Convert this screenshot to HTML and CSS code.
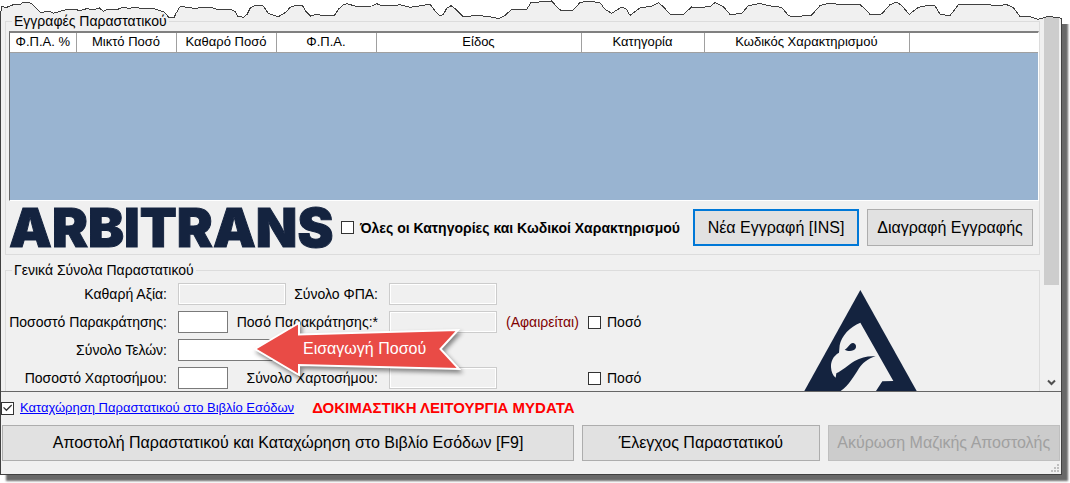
FILE: index.html
```html
<!DOCTYPE html>
<html lang="el">
<head>
<meta charset="utf-8">
<title>Παραστατικό</title>
<link rel="stylesheet" href="styles.css">
</head>
<body>
<main class="window">
  <div class="viewport">
    <div class="pane">
      <fieldset class="group records">
        <legend>Εγγραφές Παραστατικού</legend>
        <div class="datagrid">
          <table class="grid-head">
            <colgroup><col class="c-rate"><col class="c-num"><col class="c-num"><col class="c-num"><col class="c-wide"><col class="c-cat"><col class="c-wide"><col></colgroup>
            <thead><tr><th>Φ.Π.Α. %</th><th>Μικτό Ποσό</th><th>Καθαρό Ποσό</th><th>Φ.Π.Α.</th><th>Είδος</th><th>Κατηγορία</th><th>Κωδικός Χαρακτηρισμού</th><td></td></tr></thead>
          </table>
        </div>
        <div class="actions">
          <span class="wordmark">ARBITRANS</span>
          <label class="check strong"><input type="checkbox">Όλες οι Κατηγορίες και Κωδικοί Χαρακτηρισμού</label>
          <div class="buttons">
            <button class="btn focus" type="button">Νέα Εγγραφή [INS]</button>
            <button class="btn" type="button">Διαγραφή Εγγραφής</button>
          </div>
        </div>
      </fieldset>
      <fieldset class="group totals">
        <legend>Γενικά Σύνολα Παραστατικού</legend>
        <div class="totals-body">
          <div class="form">
            <label for="net">Καθαρή Αξία:</label><input class="field" id="net" disabled>
            <label for="vat">Σύνολο ΦΠΑ:</label><input class="field" id="vat" disabled>
            <span></span><span></span>

            <label for="whp">Ποσοστό Παρακράτησης:</label><input class="field short" id="whp">
            <label for="wha">Ποσό Παρακράτησης:*</label><input class="field" id="wha" disabled>
            <span class="note">(Αφαιρείται)</span>
            <label class="check"><input type="checkbox">Ποσό</label>

            <label for="fees">Σύνολο Τελών:</label><input class="field" id="fees">
            <span></span><span></span><span></span><span></span>

            <label for="stp">Ποσοστό Χαρτοσήμου:</label><input class="field short" id="stp">
            <label for="sta">Σύνολο Χαρτοσήμου:</label><input class="field" id="sta" disabled>
            <span></span>
            <label class="check"><input type="checkbox">Ποσό</label>

            <div class="callout">
              <svg viewBox="0 0 212 62" width="212" height="62" aria-hidden="true">
                <path d="M5 31 49 5V16.500L208 12 190.500 31 209 51 49 47V57Z"/>
              </svg>
              <span>Εισαγωγή Ποσού</span>
            </div>
          </div>
          <svg class="emblem" viewBox="73 30 339 303" width="113" height="101" aria-hidden="true">
            <path class="navy" d="M242 30 411 333H74Z"/>
            <path class="light" d="M242 128C211 140 185 168 180 196L178 218C160 228 153 245 154 262C155 275 159 287 168 293L170 280C188 272 205 255 225 243C245 232 265 227 288 229C262 237 248 250 238 265C222 290 208 316 183 333H289L308 304 341 303Z"/>
            <path class="navy" d="M195 209C206 205 208 190 220 189C230 191 230 200 228 205C222 215 205 215 195 209Z"/>
          </svg>
        </div>
      </fieldset>
    </div>
    <div class="scrollbar">
      <div class="thumb"></div>
      <svg viewBox="0 0 9 7" width="9" height="7" aria-hidden="true"><path d="M1 1.500 4.500 5 8 1.500"/></svg>
    </div>
  </div>
  <footer class="footer">
    <div class="status">
      <input type="checkbox" id="book" checked aria-label="Καταχώρηση">
      <a href="#book">Καταχώρηση Παραστατικού στο Βιβλίο Εσόδων</a>
      <strong>ΔΟΚΙΜΑΣΤΙΚΗ ΛΕΙΤΟΥΡΓΙΑ MYDATA</strong>
    </div>
    <div class="commands">
      <button class="btn send" type="button">Αποστολή Παραστατικού και Καταχώρηση στο Βιβλίο Εσόδων [F9]</button>
      <button class="btn verify" type="button">Έλεγχος Παραστατικού</button>
      <button class="btn cancel" type="button" disabled>Ακύρωση Μαζικής Αποστολής</button>
    </div>
    <svg class="grip" viewBox="0 0 8 8" width="8" height="8" aria-hidden="true"><path d="M6 0h2v2H6zM3 3h2v2H3zM6 3h2v2H6zM0 6h2v2H0zM3 6h2v2H3zM6 6h2v2H6z"/></svg>
  </footer>
</main>
<svg class="torn" viewBox="0 0 3210 84" preserveAspectRatio="none" aria-hidden="true">
  <path class="paper" d="M0 0V33L5 33 6 20 20 22 40 14 60 14 68 7 80 6 95 11 103 20 122 37 150 34 160 40 195 30 225 28 240 32 260 26 280 29 298 24 310 34 325 27 350 29 370 22 385 25 410 22 430 27 460 25 480 32 492 36 500 44 508 54 522 53 528 40 540 20 570 22 580 26 610 22 640 24 655 30 690 28 705 34 712 48 730 52 742 42 750 25 765 16 790 18 805 40 835 50 860 35 870 22 890 16 908 18 918 35 932 48 950 43 970 47 1003 47 1015 28 1030 14 1042 11 1070 20 1115 18 1130 11 1145 17 1180 18 1200 14 1230 22 1265 17 1290 12 1305 33 1320 47 1330 44 1340 25 1353 17 1370 30 1390 50 1435 46 1480 52 1495 56 1515 46 1533 30 1580 28 1593 8 1630 5 1655 3 1670 20 1682 31 1718 31 1740 8 1760 3 1800 8 1815 28 1835 40 1865 21 1878 26 1890 46 1920 24 1955 18 1975 8 1990 20 2012 45 2050 43 2075 21 2100 22 2130 20 2145 8 2170 20 2190 43 2225 41 2245 17 2280 10 2305 17 2345 22 2365 46 2380 51 2435 45 2460 17 2485 10 2540 15 2580 14 2590 22 2610 43 2645 42 2670 14 2690 6 2705 17 2728 43 2755 22 2780 17 2805 17 2820 43 2850 47 2875 14 2930 15 2965 12 2980 18 3020 14 3040 23 3060 50 3085 49 3115 58 3145 49 3180 54 3186 54V72H3210V0Z"/>
  <path class="edge" d="M5 33 6 20 20 22 40 14 60 14 68 7 80 6 95 11 103 20 122 37 150 34 160 40 195 30 225 28 240 32 260 26 280 29 298 24 310 34 325 27 350 29 370 22 385 25 410 22 430 27 460 25 480 32 492 36 500 44 508 54 522 53 528 40 540 20 570 22 580 26 610 22 640 24 655 30 690 28 705 34 712 48 730 52 742 42 750 25 765 16 790 18 805 40 835 50 860 35 870 22 890 16 908 18 918 35 932 48 950 43 970 47 1003 47 1015 28 1030 14 1042 11 1070 20 1115 18 1130 11 1145 17 1180 18 1200 14 1230 22 1265 17 1290 12 1305 33 1320 47 1330 44 1340 25 1353 17 1370 30 1390 50 1435 46 1480 52 1495 56 1515 46 1533 30 1580 28 1593 8 1630 5 1655 3 1670 20 1682 31 1718 31 1740 8 1760 3 1800 8 1815 28 1835 40 1865 21 1878 26 1890 46 1920 24 1955 18 1975 8 1990 20 2012 45 2050 43 2075 21 2100 22 2130 20 2145 8 2170 20 2190 43 2225 41 2245 17 2280 10 2305 17 2345 22 2365 46 2380 51 2435 45 2460 17 2485 10 2540 15 2580 14 2590 22 2610 43 2645 42 2670 14 2690 6 2705 17 2728 43 2755 22 2780 17 2805 17 2820 43 2850 47 2875 14 2930 15 2965 12 2980 18 3020 14 3040 23 3060 50 3085 49 3115 58 3145 49 3180 54 3184 56"/>
</svg>
</body>
</html>
```
FILE: styles.css
```css
* { box-sizing: border-box; }
body {
  margin: 0;
  padding-bottom: 8px;
  background: #fff;
  color: #000;
  font: 14px/16px "Liberation Sans", Arial, sans-serif;
  position: relative;
}
.window {
  margin-right: 8px;
  padding-top: 13px;
  background: #f0f0f0;
  border: 1px solid #404040;
  border-top: 0;
  box-shadow: 6px 6px 2px #686868;
  position: relative;
}
.viewport { display: flex; border-bottom: 1px solid #666; }
.pane { flex: 1; min-width: 0; padding-left: 4px; }
.group { margin: 0; border: 1px solid #dcdcdc; min-width: 0; }
.group legend { padding: 0 2px; }

.records { padding: 2px 0 8px 3px; }
.records legend { margin-left: 3px; }
.totals legend { margin-left: 2px; }
.datagrid {
  min-height: 170px;
  background: #99b4d1;
  border: 1px solid #fff;
  border-top: 2px solid #808080;
  border-left-color: #696969;
}
.grid-head { width: 100%; table-layout: fixed; border-collapse: collapse; background: #fff; font-size: 13px; }
.grid-head th, .grid-head td {
  height: 19px;
  padding: 0;
  border-right: 1px solid #a0a0a0;
  border-bottom: 1px solid #a0a0a0;
  font-weight: normal;
  white-space: nowrap;
}
.grid-head td { border-right: 0; }
.c-rate { width: 66px; }
.c-num { width: 100px; }
.c-cat { width: 123px; }
.c-wide { width: 205px; }

.actions { display: flex; align-items: center; padding-top: 8px; padding-right: 6px; }
.wordmark {
  width: 332px;
  font: 900 54px/37px Inter, sans-serif;
  color: #14233f;
  -webkit-text-stroke: 1px #14233f;
  white-space: nowrap;
}
.check { display: inline-flex; align-items: center; gap: 6px; white-space: nowrap; }
.strong { font-weight: bold; }
.buttons { display: flex; gap: 8px; margin-left: auto; }

input[type="checkbox"] {
  appearance: none;
  flex: none;
  width: 13px;
  height: 13px;
  margin: 0;
  background: #fff;
  border: 1px solid #333;
}
input[type="checkbox"]:checked::before {
  content: "";
  display: block;
  height: 11px;
  background: #333;
  clip-path: polygon(10% 48%, 18% 40%, 40% 62%, 84% 18%, 92% 27%, 40% 79%);
}

.btn {
  height: 37px;
  padding: 0;
  background: #e1e1e1;
  border: 1px solid #adadad;
  color: #000;
  font: 16px/20px "Liberation Sans", Arial, sans-serif;
  white-space: nowrap;
}
.buttons .btn { width: 166px; }
.btn.focus { border: 2px solid #0078d7; }
.btn:disabled { background: #ccc; border-color: #bfbfbf; color: #a0a0a0; }

.totals { margin-top: 7px; padding: 5px 0 2px 4px; border-bottom: 0; }
.totals-body { display: flex; align-items: flex-end; justify-content: space-between; margin-bottom: -2px; }
.form {
  position: relative;
  display: grid;
  grid-template-columns: 157px 108px 81px 108px 69px auto;
  grid-auto-rows: 22px;
  align-items: center;
  justify-items: start;
  gap: 6px 11px;
  padding-bottom: 2px;
  white-space: nowrap;
}
.form > label[for] { justify-self: end; }
.field {
  width: 100%;
  height: 22px;
  background: #fff;
  border: 1px solid #7a7a7a;
}
.field.short { width: 50px; }
.field:disabled { background: #f0f0f0; border-color: #ccc; box-shadow: inset 0 0 0 1px #fff; }
.note { color: #800000; margin-left: -2px; }
.callout {
  position: absolute;
  left: 240px;
  top: 35px;
  width: 212px;
  height: 62px;
  color: #fff;
  font-size: 16px;
}
.callout svg { display: block; filter: drop-shadow(2px 3px 2px rgba(0, 0, 0, .45)); }
.callout path { fill: #e94b46; stroke: #fff; stroke-width: 2; }
.callout span { position: absolute; left: 53px; top: 23px; }
.emblem { flex: none; margin-right: 122px; }
.navy { fill: #14233f; }
.light { fill: #f0f0f0; }

.scrollbar {
  flex: none;
  width: 21px;
  margin-top: -13px;
  padding-right: 2px;
  border-left: 4px solid #f0f0f0;
  display: flex;
  flex-direction: column;
  justify-content: space-between;
  align-items: center;
  padding-bottom: 5px;
}
.thumb { width: 100%; height: 285px; background: #cdcdcd; }
.scrollbar path { fill: none; stroke: #505050; stroke-width: 2; }

.footer { position: relative; padding: 7px 1px 13px 0; }
.status { display: flex; align-items: center; height: 18px; }
.status a { margin-left: 6px; color: #00f; font-size: 13px; }
.status strong { margin-left: 18px; color: #f00; font-size: 15px; }
.commands { display: flex; gap: 8px; margin: 8px 0 0 1px; }
.commands .btn { min-width: 0; height: 36px; }
.send { flex: 574 1 0; }
.verify { flex: 237 1 0; }
.cancel { flex: 232 1 0; }
.grip { position: absolute; right: 2px; bottom: 2px; fill: #bfbfbf; }
.torn { position: absolute; left: 0; top: 0; width: 100%; height: 28px; }
.paper { fill: #fff; }
.edge { fill: none; stroke: #404040; stroke-width: 1; vector-effect: non-scaling-stroke; shape-rendering: crispEdges; }
```
